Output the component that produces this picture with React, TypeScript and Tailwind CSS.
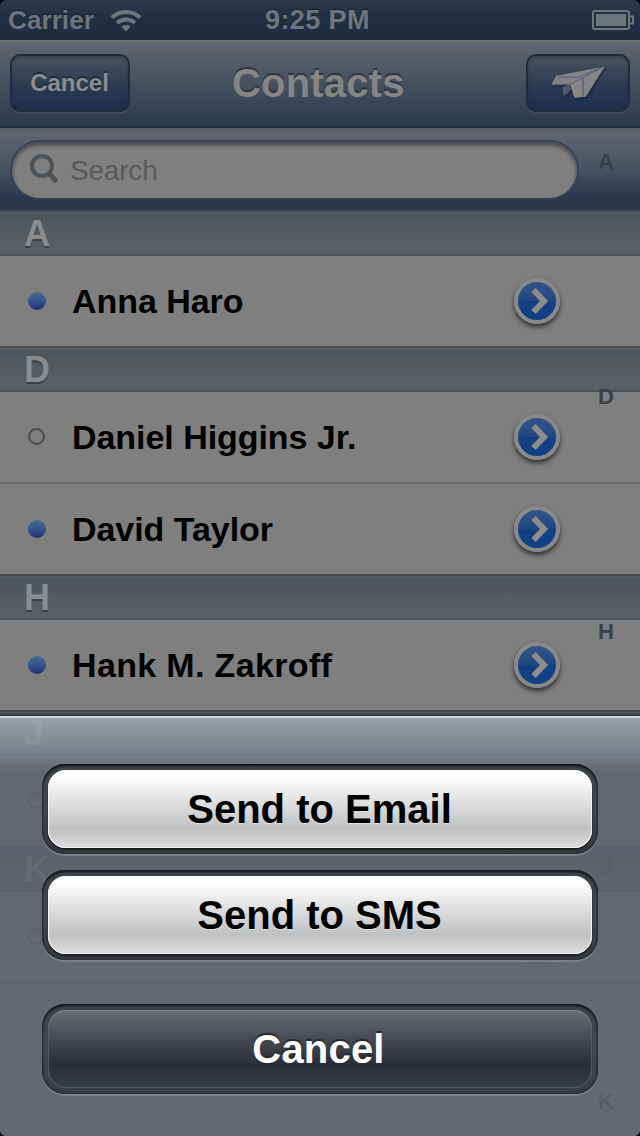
type Contact = { name: string; selected: boolean };
type Section = { letter: string; contacts: Contact[] };

const sections: Section[] = [
  { letter: "A", contacts: [{ name: "Anna Haro", selected: true }] },
  {
    letter: "D",
    contacts: [
      { name: "Daniel Higgins Jr.", selected: false },
      { name: "David Taylor", selected: true },
    ],
  },
  { letter: "H", contacts: [{ name: "Hank M. Zakroff", selected: true }] },
  { letter: "J", contacts: [{ name: "", selected: false }] },
  { letter: "K", contacts: [{ name: "", selected: false }] },
];

const indexLetters = ["A", "D", "H", "J", "K"];

function StatusBar() {
  return (
    <div className="relative flex h-10 items-center justify-between bg-linear-to-b from-[#2a384b] via-[#212f43] via-50% to-[#1c2b41] pl-2 pr-[6px] text-[26px] font-bold text-[#6e757d] [text-shadow:0_-1px_1px_#141f30]">
      <div className="flex items-center">
        <span className="w-[86px] whitespace-nowrap tracking-[0.1px]">Carrier</span>
        <svg className="ml-4 h-6 w-8" viewBox="0 0 32 24" fill="none" stroke="currentColor" strokeWidth="4">
          <path d="M1.8 9.6a20.5 20.5 0 0 1 28.4 0" />
          <path d="M7 15a13 13 0 0 1 18 0" />
          <path d="M16 23.4l-4.6-4.6a6.5 6.5 0 0 1 9.2 0z" fill="currentColor" stroke="none" />
        </svg>
      </div>
      <span className="absolute left-[265px] top-0 whitespace-nowrap text-[27px] leading-10 tracking-[0.4px]">9:25 PM</span>
      <svg className="h-5 w-[42px]" viewBox="0 0 42 20" fill="none" stroke="currentColor" strokeWidth="2">
        <rect x="1" y="1" width="36" height="18" rx="1.5" />
        <rect x="4" y="4" width="30" height="12" fill="currentColor" stroke="none" />
        <path d="M38 6.5h3v7h-3" />
      </svg>
    </div>
  );
}

function PlaneIcon() {
  return (
    <svg className="h-[58px] w-[104px]" viewBox="18 18 312 174">
      <defs>
        <filter id="planeShadow" x="-20%" y="-20%" width="140%" height="150%">
          <feDropShadow dx="3" dy="4" stdDeviation="3" floodColor="#0f1c33" floodOpacity="0.8" />
        </filter>
      </defs>
      <g filter="url(#planeShadow)">
        <path d="M126 118l18-6 8 10-10 16-14 7z" fill="#54586f" />
        <path d="M91 110l15-28 151-28-59 94-35 2-12-38z" fill="#858587" />
        <path d="M96 107l11-20 62-4-18 26z" fill="#808087" />
        <path d="M150 111l38-25 2 62-27 2z" fill="#888788" />
      </g>
      <path d="M112 86l62 1 76-31-100 53-54 2" fill="none" stroke="#575a75" strokeWidth="3" />
      <path d="M189 88l1 56M137 118l9 14" fill="none" stroke="#4e5277" strokeWidth="3.5" />
    </svg>
  );
}

const barButton =
  "flex h-[58px] items-center justify-center rounded-[10px] border-2 border-[#202b3c] bg-linear-to-b from-[#4a525f] via-[#2b3b52] via-55% to-[#1c2e4b] shadow-[0_2px_0_#414b5a,inset_0_2px_2px_rgba(15,22,35,0.3)]";

function NavBar() {
  return (
    <div className="relative flex h-[88px] items-center justify-between border-t-2 border-b-2 border-t-[#6f7273] border-b-[#1b2a42] bg-linear-to-b from-[#62666f] to-[#293a4e] px-[10px] pb-[2px]">
      <button className={`${barButton} w-[120px] text-[24px] font-bold text-[#8b8d8f] [text-shadow:0_-2px_0_#1e2a3b]`}>
        <span className="-ml-px">Cancel</span>
      </button>
      <h1 className="absolute left-[232px] top-0 whitespace-nowrap text-[40px] font-bold leading-[82px] tracking-[0.2px] text-[#858585] [text-shadow:0_-2px_0_#2b3441]">
        Contacts
      </h1>
      <button className={`${barButton} w-[104px]`}>
        <PlaneIcon />
      </button>
    </div>
  );
}

function SearchBar() {
  return (
    <div className="h-[82px] border-t-2 border-[#5b5e63] bg-linear-to-b from-[#5d626e] from-10% via-[#465160] via-50% to-[#2a384c] to-85% pl-[10px] pt-[10px]">
      <div className="flex h-[59px] w-[569px] items-center rounded-full border-2 border-b-[1px] border-[#34435a] bg-[#7f7f7f] pl-[18px] shadow-[inset_0_3px_4px_rgba(0,0,0,0.45)]">
        <svg className="-mt-[2px] h-[30px] w-[30px]" viewBox="0 0 30 30" fill="none" stroke="#4c5357" strokeWidth="4">
          <circle cx="12" cy="12" r="10" />
          <path d="M18.5 19l8 8.5" strokeWidth="5" />
        </svg>
        <span className="ml-[10px] mt-[2px] text-[28px] tracking-[-0.2px] text-[#5a5a5a]">Search</span>
      </div>
    </div>
  );
}

function DisclosureButton() {
  return (
    <button className="flex h-[46px] w-[46px] items-center justify-center rounded-full border-4 border-[#898989] bg-linear-to-b from-[#345489] from-0% via-[#1f4683] via-50% to-[#133f83] to-50% shadow-[0_3px_5px_rgba(0,0,0,0.65)]">
      <svg className="ml-[5px] h-7 w-[18px]" viewBox="0 0 18 28" fill="none" stroke="#8d8d8d" strokeWidth="6">
        <path d="M2.5 3L13 14 2.5 25" />
      </svg>
    </button>
  );
}

function ContactRow({ contact, last }: { contact: Contact; last: boolean }) {
  return (
    <div className={`flex items-center bg-[#7f7f7f] pl-7 ${last ? "h-[90px]" : "h-[92px] border-b-2 border-[#6a6a6a]"}`}>
      {contact.selected ? (
        <span className="h-[18px] w-[18px] rounded-full bg-linear-to-b from-[#466b91] via-[#35558e] to-[#242f73]" />
      ) : (
        <span className="-mt-[2px] h-[17px] w-[17px] rounded-full border-2 border-[#4e4e4e]" />
      )}
      <span
        className={`absolute left-[72px] whitespace-nowrap text-[34px] font-bold text-black ${
          contact.name.endsWith("ff") ? "tracking-[0.35px]" : "tracking-[-0.05px]"
        }`}
      >
        {contact.name}
      </span>
      <span className="absolute left-[514px]">
        <DisclosureButton />
      </span>
    </div>
  );
}

function SectionHeader({ letter }: { letter: string }) {
  return (
    <div className="h-[46px] border-t-2 border-b-2 border-t-[#464c51] border-b-[#4b5259] bg-linear-to-b from-[#4b545c] via-[#555b5f] via-50% to-[#5c6062] pl-6 shadow-[inset_0_2px_0_#555e66]">
      <span className="text-[36px] font-bold leading-[44px] text-[#8a8c8d] [text-shadow:0_2px_0_#3a3f43]">{letter}</span>
    </div>
  );
}

function ContactList() {
  return (
    <div>
      {sections.map((section) => (
        <section key={section.letter}>
          <SectionHeader letter={section.letter} />
          {section.contacts.map((contact, i) => (
            <ContactRow
              key={i}
              contact={contact}
              last={i === section.contacts.length - 1 && section.letter !== "K"}
            />
          ))}
        </section>
      ))}
      <div className="h-[92px] border-b-2 border-[#6a6a6a] bg-[#7f7f7f]" />
      <div className="h-[92px] bg-[#7f7f7f]" />
    </div>
  );
}

function SectionIndex() {
  return (
    <div className="absolute right-[22px] top-[144px] flex w-6 flex-col items-center gap-[199px] text-[22px] font-bold leading-9 text-[#3a3f46]">
      {indexLetters.map((letter) => (
        <span key={letter}>{letter}</span>
      ))}
    </div>
  );
}

function SheetButton({ label, dark }: { label: string; dark?: boolean }) {
  return (
    <div className="h-[90px] rounded-[23px] bg-linear-to-b from-[#3c4047] via-[#42464d] to-[#383b40] p-[6px] shadow-[0_2px_0_#7b808a,inset_0_2px_2px_#15171b,inset_0_0_2px_1px_#292c32]">
      <button
        className={`h-[78px] w-full rounded-[18px] text-[40px] font-bold leading-[78px] ${
          dark
            ? "bg-linear-to-b from-[#6b6d72] from-0% via-[#2a2d37] via-70% to-[#353e47] tracking-[0.2px] text-white shadow-[inset_0_1px_0_#85888d,inset_0_-1px_0_#565b60,inset_1px_0_1px_#5b5f66,inset_-1px_0_1px_#5b5f66] [text-shadow:0_-2px_1px_#25272c]"
            : "bg-linear-to-b from-white from-8% via-[#c0c1c3] via-75% to-[#dcdddd] text-black shadow-[inset_0_-1px_0_#f0f0ef,inset_1px_0_1px_#f4f4f4,inset_-1px_0_1px_#f4f4f4,0_2px_2px_#17191c] [text-shadow:0_1px_0_#e0e0e0]"
        }`}
      >
        <span className={dark ? "-ml-[3px]" : "-ml-px"}>{label}</span>
      </button>
    </div>
  );
}

function ActionSheet() {
  return (
    <div className="absolute inset-x-0 bottom-0 h-[420px] border-t-2 border-[#d5d8dc] bg-[linear-gradient(to_bottom,rgba(168,175,184,0.86)_0px,rgba(122,131,144,0.87)_38px,rgba(105,109,121,0.84)_48px,rgba(94,99,111,0.83)_58px)] bg-origin-border px-[42px] pt-[46px] shadow-[0_-2px_3px_rgba(25,30,33,0.6)]">
      <div className="flex flex-col gap-4">
        <SheetButton label="Send to Email" />
        <SheetButton label="Send to SMS" />
      </div>
      <div className="mt-11">
        <SheetButton label="Cancel" dark />
      </div>
    </div>
  );
}

export default function App() {
  return (
    <div className="h-[1136px] w-[640px] bg-black">
      <div className="relative h-full overflow-hidden rounded-[6px] font-['Liberation_Sans',Arial,sans-serif]">
        <StatusBar />
        <NavBar />
        <SearchBar />
        <ContactList />
        <SectionIndex />
        <ActionSheet />
      </div>
    </div>
  );
}
